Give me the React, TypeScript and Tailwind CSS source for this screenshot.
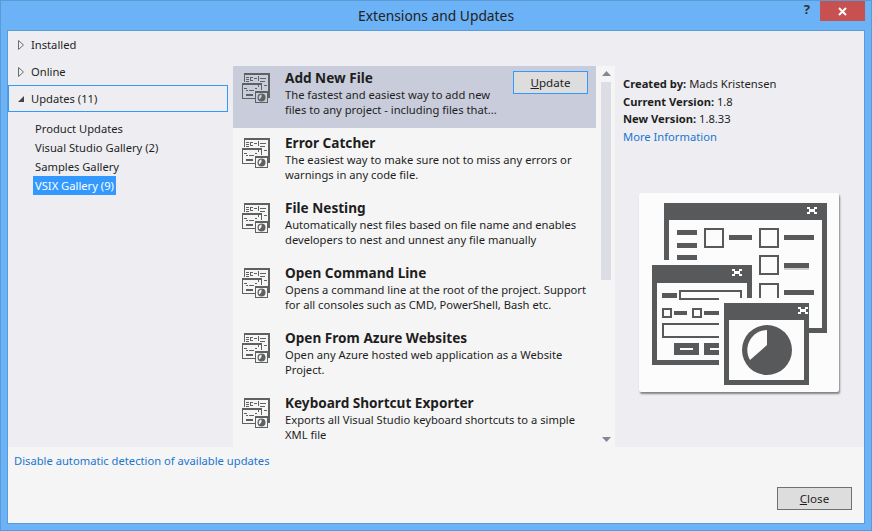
import React from "react";

const D = "#58595b";

function Art({ bg, className }: { bg: string; className: string }) {
  const X = ({ x, y }: { x: number; y: number }) => (
    <g fill="#fff">
      <rect x={x} y={y} width="3" height="2" />
      <rect x={x + 7} y={y} width="3" height="2" />
      <rect x={x + 2} y={y + 2} width="6" height="3" />
      <rect x={x} y={y + 5} width="3" height="2" />
      <rect x={x + 7} y={y + 5} width="3" height="2" />
    </g>
  );
  return (
    <svg viewBox="13 10 175 182" className={className} shapeRendering="crispEdges">
      {/* back window */}
      <g fill={D}>
        <rect x="25" y="10" width="163" height="17" />
        <rect x="25" y="27" width="5" height="40" />
        <rect x="183" y="27" width="5" height="113" />
        <rect x="170" y="135" width="18" height="5" />
        <rect x="38" y="37" width="20" height="5" />
        <rect x="38" y="50" width="20" height="5" />
        <rect x="38" y="62" width="20" height="5" />
        <rect x="90" y="42" width="23" height="5" />
        <rect x="145" y="42" width="30" height="5" />
        <rect x="145" y="70" width="25" height="5" />
        <rect x="145" y="97" width="30" height="5" />
      </g>
      <rect x="145" y="75" width="25" height="2" fill="#cfcfcf" />
      <g fill="none" stroke={D} strokeWidth="2">
        <rect x="66" y="36" width="18" height="18" />
        <rect x="121" y="36" width="18" height="18" />
        <rect x="121" y="63" width="18" height="18" />
        <path d="M121 110V91H139V110" />
      </g>
      <X x={168} y={14} />
      {/* middle window */}
      <rect x="13" y="72" width="100" height="100" fill={D} />
      <rect x="18" y="90" width="90" height="77" fill={bg} />
      <X x={93} y={76} />
      <g fill={D}>
        <rect x="23" y="100" width="15" height="5" />
        <rect x="35" y="118" width="13" height="4" />
        <rect x="65" y="118" width="15" height="4" />
        <rect x="35" y="150" width="25" height="12" />
        <rect x="65" y="150" width="15" height="12" />
      </g>
      <g fill={bg}>
        <rect x="41" y="155" width="13" height="2" />
        <rect x="71" y="155" width="9" height="2" />
      </g>
      <g fill="none" stroke={D} strokeWidth="2">
        <rect x="41" y="98" width="61" height="8" />
        <rect x="24" y="116" width="8" height="8" />
        <rect x="54" y="116" width="8" height="8" />
        <rect x="24" y="131" width="70" height="13" />
      </g>
      {/* front window */}
      <rect x="80" y="105" width="5" height="87" fill={bg} />
      <rect x="80" y="105" width="95" height="5" fill={bg} />
      <rect x="85" y="110" width="85" height="82" fill={D} />
      <rect x="90" y="127" width="75" height="60" fill={bg} />
      <X x={159} y={114} />
      <g shapeRendering="auto">
        <circle cx="128" cy="157" r="25" fill={D} />
        <path d="M128 137V152L111 167A20 20 0 0 1 128 137Z" fill={bg} />
      </g>
    </svg>
  );
}

function SmallIcon({ bg }: { bg: string }) {
  const c = "#5f6062";
  return (
    <svg width="34" height="34" viewBox="0 0 34 34" className="shrink-0 -ml-[3px]" shapeRendering="crispEdges">
      <g fill={c}>
        {/* back window */}
        <rect x="4" y="3" width="26" height="2" />
        <rect x="4" y="5" width="1" height="7" />
        <rect x="28" y="3" width="2" height="25" />
        <rect x="6" y="7" width="3" height="1" />
        <rect x="6" y="9" width="3" height="1" />
        <rect x="6" y="11" width="3" height="1" />
        <rect x="10" y="7" width="3" height="1" />
        <rect x="10" y="7" width="1" height="4" />
        <rect x="10" y="10" width="3" height="1" />
        <rect x="14" y="8" width="3" height="1" />
        <rect x="18" y="6" width="1" height="5" />
        <rect x="20" y="8" width="6" height="1" />
        <rect x="20" y="11" width="5" height="1" />
        <rect x="18" y="13" width="1" height="4" />
        <rect x="21" y="13" width="1" height="4" />
        <rect x="24" y="15" width="3" height="1" />
        {/* middle window */}
        <rect x="2" y="13" width="20" height="2" />
        <rect x="2" y="15" width="1" height="14" />
        <rect x="21" y="15" width="1" height="5" />
        <rect x="2" y="28" width="13" height="1" />
        <rect x="4" y="18" width="3" height="1" />
        <rect x="6" y="20" width="2" height="1" />
        <rect x="9" y="20" width="5" height="1" />
        <rect x="15" y="18" width="2" height="1" />
        <rect x="6" y="24" width="7" height="2" />
        {/* front window */}
        <rect x="15" y="21" width="13" height="2" />
        <rect x="15" y="23" width="1" height="10" />
        <rect x="27" y="23" width="1" height="10" />
        <rect x="15" y="32" width="13" height="1" />
      </g>
      <g shapeRendering="auto">
        <circle cx="21.5" cy="27.5" r="4" fill={c} />
        <path d="M21.5 24.5V27L19.5 29.5A3 3 0 0 1 21.5 24.5Z" fill={bg} />
      </g>
    </svg>
  );
}

const items = [
  { t: "Add New File", a: "The fastest and easiest way to add new", b: "files to any project - including files that...", sel: true },
  { t: "Error Catcher", a: "The easiest way to make sure not to miss any errors or", b: "warnings in any code file." },
  { t: "File Nesting", a: "Automatically nest files based on file name and enables", b: "developers to nest and unnest any file manually" },
  { t: "Open Command Line", a: "Opens a command line at the root of the project. Support", b: "for all consoles such as CMD, PowerShell, Bash etc." },
  { t: "Open From Azure Websites", a: "Open any Azure hosted web application as a Website", b: "Project." },
  { t: "Keyboard Shortcut Exporter", a: "Exports all Visual Studio keyboard shortcuts to a simple", b: "XML file" },
];

function Outline() {
  return (
    <svg width="6" height="10" viewBox="0 0 6 10" className="shrink-0">
      <path d="M0.5 0.5L5.5 5L0.5 9.5Z" fill="#eeeef2" stroke="#6d6d6d" />
    </svg>
  );
}

export default function App() {
  return (
    <div
      className="w-[872px] h-[531px] flex flex-col bg-[#6cb2f6] border border-[#5b9bd5] overflow-hidden text-[11.2px] leading-[17px] text-[#1e1e1e]"
      style={{ fontFamily: '"Noto Sans", sans-serif' }}
    >
      <div className="h-[29px] shrink-0 flex items-start relative">
        <div className="flex-1 text-center text-[13.8px] leading-[30px] text-[#222]">Extensions and Updates</div>
        <div className="absolute right-[61px] top-0 text-[13px] font-bold leading-[16px] text-[#333]">?</div>
        <div className="absolute right-[6px] top-0 w-[45px] h-[20px] bg-[#c75050] flex items-center justify-center">
          <svg width="9" height="9" viewBox="0 0 9 9">
            <path d="M1 1L8 8M8 1L1 8" stroke="#fff" strokeWidth="2" />
          </svg>
        </div>
      </div>
      <div className="mx-[6px] h-[494px] flex flex-col bg-[#f5f5f5] border border-[#5b9bd5]">
        <div className="h-[416px] shrink-0 flex bg-[#eeeef2]">
          {/* nav */}
          <div className="w-[224px] shrink-0 flex flex-col">
            <div className="h-[27px] flex items-center gap-[7px] pl-[10px] mr-[4px]">
              <Outline />
              <span>Installed</span>
            </div>
            <div className="h-[27px] flex items-center gap-[7px] pl-[10px] mr-[4px]">
              <Outline />
              <span>Online</span>
            </div>
            <div className="h-[27px] w-[220px] flex items-center gap-[6px] pl-[8px] border border-[#3399ff]">
              <svg width="8" height="8" viewBox="0 0 8 8" className="shrink-0">
                <path d="M7 1V7H1Z" fill="#444" />
              </svg>
              <span>Updates (11)</span>
            </div>
            <div className="flex flex-col items-start pl-[25px] pt-[7px]">
              <div className="h-[19px] px-[2px] leading-[19px]">Product Updates</div>
              <div className="h-[19px] px-[2px] leading-[19px]">Visual Studio Gallery (2)</div>
              <div className="h-[19px] px-[2px] leading-[19px]">Samples Gallery</div>
              <div className="h-[19px] px-[2px] leading-[19px] bg-[#3399ff] text-white">VSIX Gallery (9)</div>
            </div>
          </div>
          {/* list */}
          <div className="w-[382px] shrink-0 mt-[35px] ml-[1px] bg-[#f5f5f5] flex overflow-hidden">
            <div className="w-[363px] shrink-0 flex flex-col">
              {items.map((it) => (
                <div
                  key={it.t}
                  className={`h-[62px] mb-[3px] shrink-0 flex pl-[10px] pt-[4px] ${it.sel ? "bg-[#c9ccda]" : ""}`}
                >
                  <SmallIcon bg={it.sel ? "#c9ccda" : "#f5f5f5"} />
                  <div className="ml-[11px] -mt-[2px] flex-1 min-w-0">
                    <div className="text-[13.6px] leading-[19px] font-bold whitespace-nowrap text-[#1e1e1e]">{it.t}</div>
                    <div className="leading-[15px] whitespace-nowrap">{it.a}</div>
                    <div className="leading-[15px] whitespace-nowrap">{it.b}</div>
                  </div>
                  {it.sel && (
                    <button className="w-[75px] h-[23px] mr-[8px] mt-[1px] bg-[#dddddd] border border-[#3399ff] text-[11.6px] leading-[20px] pt-[1px] text-[#1e1e1e]">
                      <u>U</u>pdate
                    </button>
                  )}
                </div>
              ))}
            </div>
            <div className="w-[19px] shrink-0 flex flex-col items-center pt-[5px] pl-[1px]">
              <svg width="9" height="5" viewBox="0 0 9 5">
                <path d="M4.5 0L9 5H0Z" fill="#85869a" />
              </svg>
              <div className="w-[10px] h-[198px] mt-[6px] bg-[#dddde6]" />
              <div className="flex-1" />
              <svg width="9" height="5" viewBox="0 0 9 5" className="mb-[5px]">
                <path d="M0 0H9L4.5 5Z" fill="#85869a" />
              </svg>
            </div>
          </div>
          {/* details */}
          <div className="flex-1 flex flex-col pl-[8px] pt-[44px]">
            <div className="leading-[17.7px]"><b>Created by:</b> Mads Kristensen</div>
            <div className="leading-[17.7px]"><b>Current Version:</b> 1.8</div>
            <div className="leading-[17.7px]"><b>New Version:</b> 1.8.33</div>
            <div className="leading-[17.7px] text-[#1b75d0]">More Information</div>
            <div className="w-[200px] h-[199px] mt-[47px] ml-[16px] bg-[#fcfcfc] rounded-[2px] shadow-[1px_2px_2px_rgba(0,0,0,0.45)] relative">
              <Art bg="#fcfcfc" className="absolute left-[13px] top-[10px] w-[175px] h-[182px]" />
            </div>
          </div>
        </div>
        {/* footer */}
        <div className="flex-1 flex flex-col pl-[6px] pr-[12px]">
          <div className="pt-[5px] text-[#1b75d0] leading-[17px]">Disable automatic detection of available updates</div>
          <div className="flex justify-end mt-[18px]">
            <button className="w-[75px] h-[23px] bg-[#dddddd] border border-[#707070] text-[11.6px] leading-[20px] pt-[1px] text-[#1e1e1e]">
              <u>C</u>lose
            </button>
          </div>
        </div>
      </div>
    </div>
  );
}
